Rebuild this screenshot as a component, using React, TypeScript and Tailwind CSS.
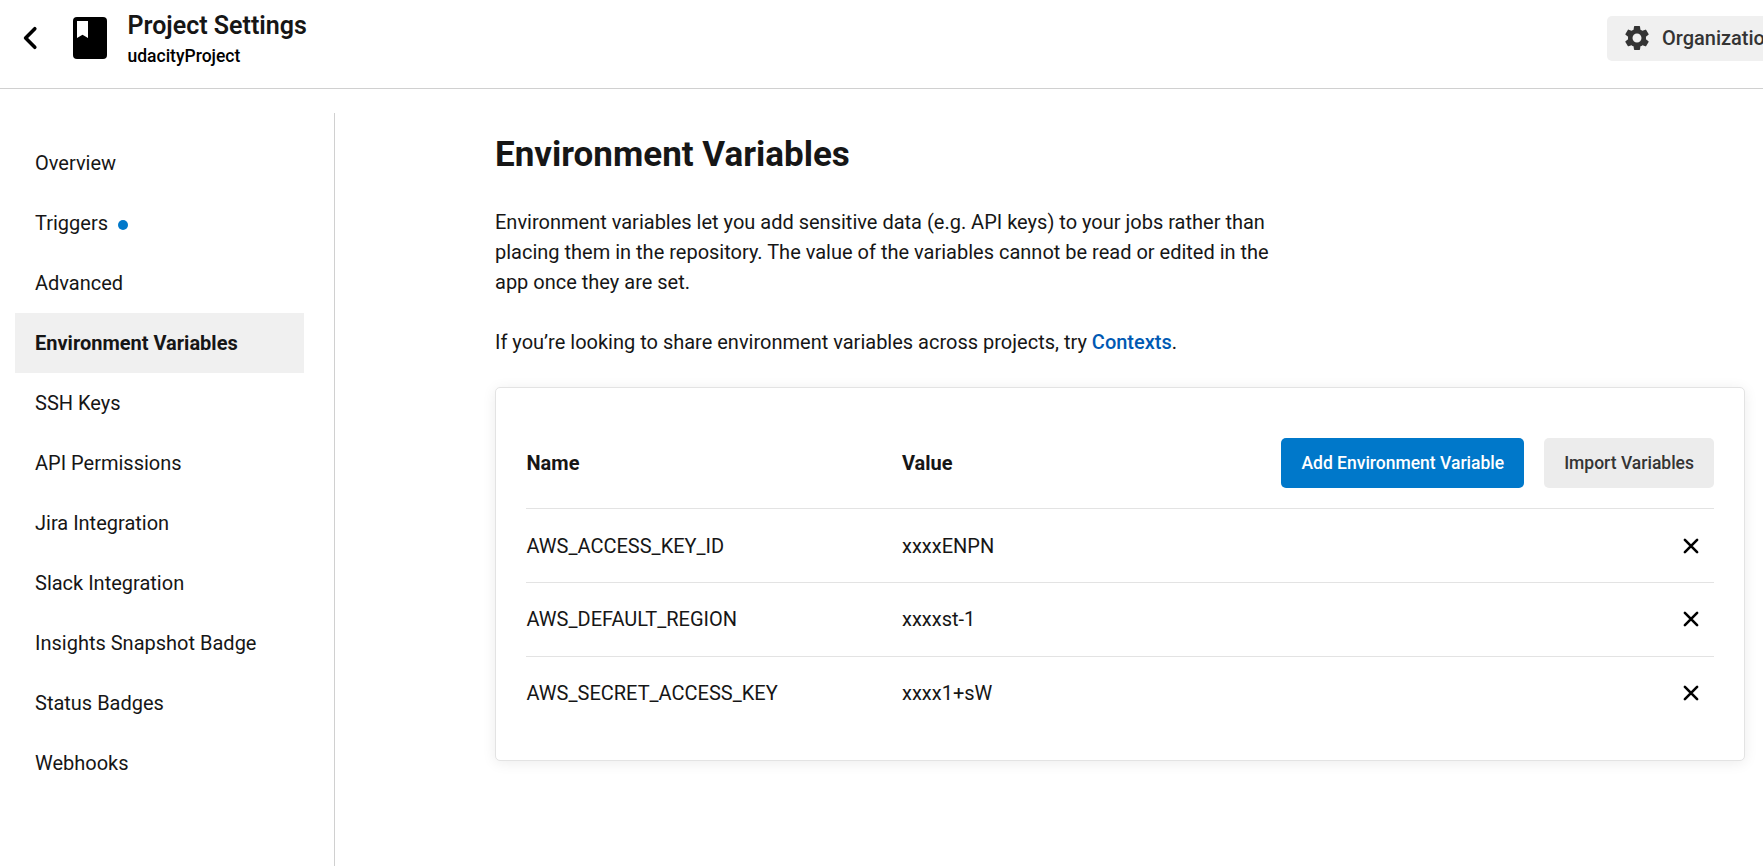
import React from "react";
import { MdSettings } from "react-icons/md";

const navItems = [
  { label: "Overview" },
  { label: "Triggers", dot: true },
  { label: "Advanced" },
  { label: "Environment Variables", active: true },
  { label: "SSH Keys" },
  { label: "API Permissions" },
  { label: "Jira Integration" },
  { label: "Slack Integration" },
  { label: "Insights Snapshot Badge" },
  { label: "Status Badges" },
  { label: "Webhooks" },
];

const variables = [
  { name: "AWS_ACCESS_KEY_ID", value: "xxxxENPN" },
  { name: "AWS_DEFAULT_REGION", value: "xxxxst-1" },
  { name: "AWS_SECRET_ACCESS_KEY", value: "xxxx1+sW" },
];

function BackIcon() {
  return (
    <svg width="20" height="30" viewBox="0 0 20 30" fill="none" stroke="#000" strokeWidth="3.6" strokeLinecap="round" strokeLinejoin="round">
      <path d="M14.8 5.7 5.6 15 14.8 24.3" />
    </svg>
  );
}

function ProjectIcon() {
  return (
    <svg width="34" height="42" viewBox="0 0 34 42">
      <rect width="34" height="42" rx="4" fill="#000" />
      <path d="M4 4h11v17l-5.5-3.2L4 21Z" fill="#fff" />
    </svg>
  );
}

function CloseIcon() {
  return (
    <svg width="20" height="20" viewBox="0 0 20 20" fill="none" stroke="#000" strokeWidth="2.6" strokeLinecap="round">
      <path d="m3.9 3.9 12.2 12.2M16.1 3.9 3.9 16.1" />
    </svg>
  );
}

function Header() {
  return (
    <header className="flex h-[89px] shrink-0 items-start border-b border-[#d0d0d0] bg-white">
      <button className="mt-[23px] ml-5" aria-label="Back">
        <BackIcon />
      </button>
      <div className="mt-[17px] ml-[33px]">
        <ProjectIcon />
      </div>
      <div className="mt-[11px] ml-[20.5px]">
        <div className="text-[25px] leading-[30px] font-semibold text-[#161616]">Project Settings</div>
        <div className="text-[17.5px] leading-[30px] font-medium text-black">udacityProject</div>
      </div>
      <button className="mt-4 -mr-[75px] ml-auto flex h-[45px] w-[231px] shrink-0 items-center gap-[10px] rounded-[5px] bg-[#f0f0f0] pb-px pl-[15px] text-xl font-medium whitespace-nowrap text-[#343434]">
        <MdSettings size={30} className="shrink-0" />
        Organization
      </button>
    </header>
  );
}

function Sidebar() {
  return (
    <nav className="mt-6 w-[335px] shrink-0 border-r border-[#d0d0d0] pt-5 pr-[30px] pl-[15px]">
      {navItems.map((item) => (
        <a
          key={item.label}
          className={
            item.active
              ? "flex h-[60px] items-center bg-[#f0f0f0] pl-5 font-bold"
              : "flex h-[60px] items-center pl-5"
          }
        >
          {item.label}
          {item.dot && <span className="mt-[3px] ml-[10px] size-[10px] rounded-full bg-[#0078ca]" />}
        </a>
      ))}
    </nav>
  );
}

function VariablesCard() {
  return (
    <section className="mt-[30px] h-[374px] w-[1250px] rounded-[5px] border border-[#e3e3e3] bg-white px-[30px] pt-[50px] shadow-[0_2px_14px_rgba(0,0,0,0.08)]">
      <div className="flex h-[71px] items-start border-b border-[#e3e3e3]">
        <div className="w-[375.5px] pl-[0.5px] leading-[50px] font-bold">Name</div>
        <div className="pl-[0.5px] leading-[50px] font-bold">Value</div>
        <div className="ml-auto flex gap-5">
          <button className="h-[50px] rounded-[5px] bg-[#0078ca] px-5 text-[17.5px] font-medium text-white">
            Add Environment Variable
          </button>
          <button className="h-[50px] rounded-[5px] bg-[#ececec] px-5 text-[17.5px] font-medium text-[#343434]">
            Import Variables
          </button>
        </div>
      </div>
      {variables.map((v, i) => (
        <div
          key={v.name}
          className={
            i === 0
              ? "flex h-[74px] items-center border-b border-[#e3e3e3]"
              : "flex h-[74px] items-center border-b border-[#e3e3e3] pb-0.5 last:border-b-0"
          }
        >
          <div className="w-[375.5px] pl-[0.5px]">{v.name}</div>
          <div className="pl-[0.5px]">{v.value}</div>
          <button className="mr-[13px] ml-auto" aria-label="Delete">
            <CloseIcon />
          </button>
        </div>
      ))}
    </section>
  );
}

export default function App() {
  return (
    <div className="flex h-[866px] w-full flex-col overflow-hidden bg-white font-[Roboto,sans-serif] text-xl leading-[30px] text-[#161616]">
      <Header />
      <div className="flex min-h-0 flex-1">
        <Sidebar />
        <main className="ml-40 pt-[45px]">
          <h1 className="text-[35px] leading-[42px] font-bold">Environment Variables</h1>
          <p className="mt-[31px] w-[800px]">
            Environment variables let you add sensitive data (e.g. API keys) to your jobs rather than placing them in
            the repository. The value of the variables cannot be read or edited in the app once they are set.
          </p>
          <p className="mt-[30px]">
            If you’re looking to share environment variables across projects, try{" "}
            <a className="font-medium text-[#0059b3]">Contexts</a>.
          </p>
          <VariablesCard />
        </main>
      </div>
    </div>
  );
}
